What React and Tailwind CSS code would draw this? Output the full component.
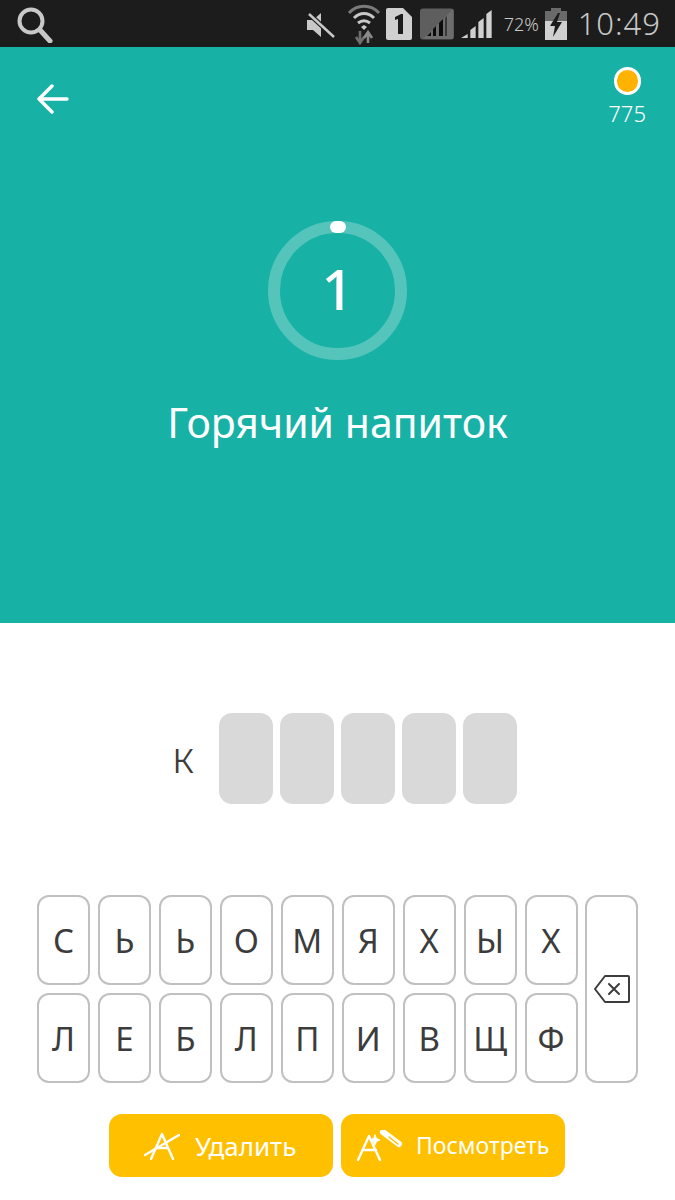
const hand = { fontFamily: '"Noto Sans", "Open Sans", sans-serif' };

function StatusIcons() {
  return (
    <>
      <svg width="30" height="36" viewBox="0 0 30 36" fill="none">
        <path d="M1 14h6l8-7v24l-8-7H1z" fill="#c8c8c8" />
        <path d="M2 7l26 24" stroke="#1c1c1c" strokeWidth="5" />
        <path d="M3 8l25 23" stroke="#c8c8c8" strokeWidth="2.5" />
      </svg>
      <svg width="34" height="42" viewBox="0 0 34 42" className="ml-[11px]" fill="none">
        <path d="M2 10C10 1 24 1 32 10" stroke="#7a7a7a" strokeWidth="3" />
        <path d="M7 15c6-6 14-6 20 0" stroke="#c8c8c8" strokeWidth="3" />
        <path d="M11 20c4-3 8-3 12 0" stroke="#c8c8c8" strokeWidth="3" />
        <path d="M14 24l3-2 3 2-3 3z" fill="#c8c8c8" />
        <path d="M13 28v11M9 34l4 6 4-6" stroke="#6f6f6f" strokeWidth="2.6" />
        <path d="M21 40V29M17 35l4-6 4 6" stroke="#8a8a8a" strokeWidth="2.6" />
      </svg>
      <svg width="26" height="32" viewBox="0 0 26 32" className="ml-[5px]">
        <path d="M2 0h15l9 9v21a2 2 0 0 1-2 2H2a2 2 0 0 1-2-2V2a2 2 0 0 1 2-2z" fill="#d0d0d0" />
        <path d="M9 9l6-3h2v20h-5V11l-3 1z" fill="#1c1c1c" />
      </svg>
      <svg width="34" height="32" viewBox="0 0 34 32" className="ml-[8px]">
        <rect width="34" height="31" y="0.5" rx="3" fill="#5e5e5e" />
        <path d="M33 1v30H3z" fill="#7a7a7a" opacity="0.55" />
        <path d="M7 28l4-4v4zM13 28v-7l3-3v10zM19 28V15l4-4v17z" fill="#0c0c0c" />
        <path d="M25 28V10l2-2v20z" fill="#3a3a3a" />
      </svg>
      <svg width="32" height="32" viewBox="0 0 24 32" className="ml-[7px]" preserveAspectRatio="none">
        <path d="M0 30l5-4v4zM7 30v-8l4-4v12zM13 30V14l4-4v20zM19 30V6l4-4v28z" fill="#d0d0d0" />
      </svg>
      <span className="ml-[11px] w-[37px] whitespace-nowrap text-[18px] font-light leading-none text-[#c8c8c8]" style={hand}>72%</span>
      <svg width="22" height="32" viewBox="0 0 22 32" className="ml-[4px]">
        <rect x="6" y="0" width="10" height="4" fill="#6a6a6a" />
        <rect x="0" y="3" width="22" height="29" fill="#d0d0d0" />
        <rect x="0" y="3" width="22" height="10" fill="#6a6a6a" />
        <path d="M13 5L5 18h5l-2 11 9-15h-5l3-9z" fill="#1c1c1c" />
      </svg>
      <span className="ml-[11px] text-[31px] font-light leading-none tracking-[1px] text-[#c8c8c8]" style={hand}>10:49</span>
    </>
  );
}

function Key({ ch }) {
  return (
    <div className="flex h-[90px] w-[53px] items-center justify-center rounded-[12px] border-2 border-[#c0c0c0] bg-white text-[33px] leading-none text-[#3c3c3c]" style={hand}>
      {ch}
    </div>
  );
}

const row1 = ['С', 'Ь', 'Ь', 'О', 'М', 'Я', 'Х', 'Ы', 'Х'];
const row2 = ['Л', 'Е', 'Б', 'Л', 'П', 'И', 'В', 'Щ', 'Ф'];

export default function App() {
  return (
    <div className="flex h-[1200px] w-[675px] flex-col overflow-hidden bg-white">
      <div className="flex h-[47px] items-center bg-[#1c1c1c]">
        <svg width="38" height="38" viewBox="0 0 38 38" className="ml-[15px]" fill="none" stroke="#c8c8c8">
          <circle cx="16" cy="16" r="11.5" strokeWidth="4" />
          <path d="M25 25l10 11" strokeWidth="5" strokeLinecap="round" />
        </svg>
        <div className="ml-auto mr-[14px] flex items-center">
          <StatusIcons />
        </div>
      </div>

      <div className="relative flex h-[576px] flex-col items-center bg-[#17b1a6]">
        <svg width="32" height="32" viewBox="0 0 32 32" className="absolute left-[37px] top-[36px]" fill="none" stroke="white" strokeWidth="3.4" strokeLinecap="round" strokeLinejoin="round">
          <path d="M2 16h28M15 3L2 16l13 13" />
        </svg>
        <div className="absolute right-[29px] top-[20px] flex flex-col items-center">
          <div className="h-[28px] w-[27px] rounded-full border-[3px] border-white bg-[#ffb300]" />
          <span className="mt-[7px] text-[22px] font-light leading-none text-white" style={hand}>775</span>
        </div>

        <div className="relative mt-[174px] flex h-[139px] w-[139px] items-center justify-center rounded-full border-[12px] border-[#55c5bc]">
          <div className="absolute left-1/2 top-[-12px] h-[12px] w-[16px] -translate-x-1/2 rounded-full bg-white" />
          <span className="mb-[6px] text-[56px] font-medium leading-none text-white" style={hand}>1</span>
        </div>
        <div className="mt-[36px] text-[41px] leading-[52px] text-white" style={hand}>Горячий напиток</div>
      </div>

      <div className="mt-[90px] flex h-[91px] items-center pl-[172px]">
        <span className="mb-[5px] w-[47px] text-[44px] font-light leading-none text-[#3c3c3c]" style={hand}>к</span>
        <div className="flex gap-[7px]">
          {[0, 1, 2, 3, 4].map((i) => (
            <div key={i} className="h-[91px] w-[54px] rounded-[13px] bg-[#d9d9d9]" />
          ))}
        </div>
      </div>

      <div className="ml-[37px] mt-[91px] flex gap-[7.95px]">
        <div className="flex flex-col gap-[8px]">
          <div className="flex gap-[7.95px]">{row1.map((c, i) => <Key key={i} ch={c} />)}</div>
          <div className="flex gap-[7.95px]">{row2.map((c, i) => <Key key={i} ch={c} />)}</div>
        </div>
        <div className="flex h-[188px] w-[53px] items-center justify-center rounded-[12px] border-2 border-[#c0c0c0] bg-white">
          <svg width="36" height="28" viewBox="0 0 36 28" fill="none" stroke="#3c3c3c" strokeLinejoin="round" strokeLinecap="round" strokeWidth="2">
            <path d="M11 1h23a1 1 0 0 1 1 1v24a1 1 0 0 1-1 1H11L1 14z" />
            <path d="M15 9l10 10M25 9L15 19" />
          </svg>
        </div>
      </div>

      <div className="ml-[109px] mt-[31px] flex gap-[8px]">
        <div className="flex h-[63px] w-[224px] items-center rounded-[13px] bg-[#ffc000] pl-[35px] text-white">
          <svg width="36" height="30" viewBox="0 0 36 30" fill="none" stroke="white" strokeWidth="2.4" strokeLinecap="round" strokeLinejoin="round">
            <path d="M7 28L18 3l11 25M12 17h12" />
            <path d="M1 24L35 4" />
          </svg>
          <span className="ml-[15px] text-[26px] leading-none" style={hand}>Удалить</span>
        </div>
        <div className="flex h-[63px] w-[224px] items-center rounded-[13px] bg-[#ffc000] pl-[14px] text-white">
          <svg width="48" height="32" viewBox="0 0 48 32" fill="none" stroke="white" strokeLinecap="round" strokeLinejoin="round">
            <path d="M3 30L14 6l11 24M8 20h13" strokeWidth="2.4" />
            <path d="M28 2l16 12" strokeWidth="6" />
            <path d="M34 7l9 7" stroke="#ffc000" strokeWidth="1.5" />
            <path d="M20 5l1.500 3.500L25 10l-3.500 1.500L20 15l-1.500-3.500L15 10l3.500-1.500z" fill="white" strokeWidth="1" />
          </svg>
          <span className="ml-[13px] text-[23px] leading-none" style={hand}>Посмотреть</span>
        </div>
      </div>
    </div>
  );
}
